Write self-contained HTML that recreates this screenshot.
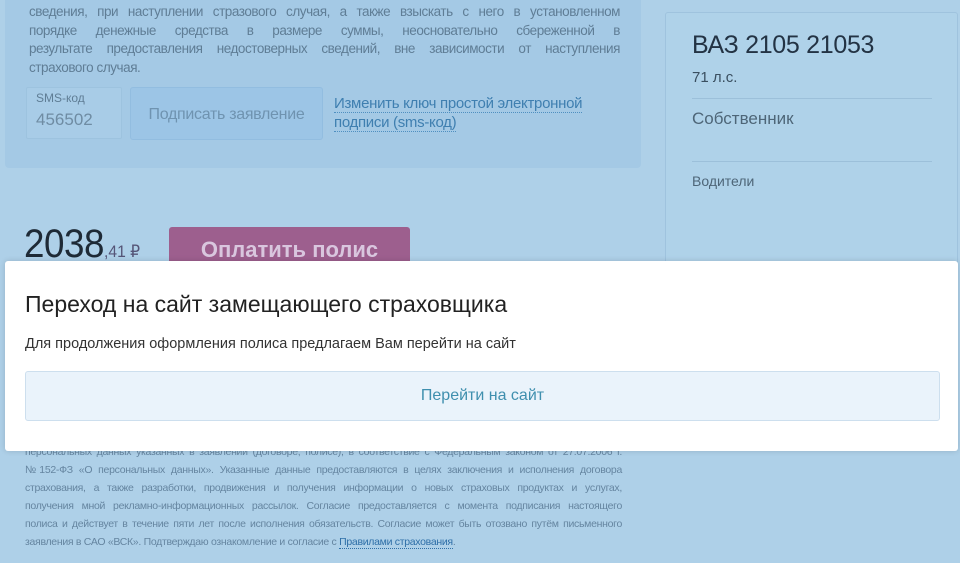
<!DOCTYPE html>
<html><head><meta charset="utf-8"><style>
*{margin:0;padding:0;box-sizing:border-box}
body{width:960px;height:563px;overflow:hidden;background:#aed0e8;font-family:"Liberation Sans","DejaVu Sans",sans-serif;position:relative;color:#4f6a80}
.abs{position:absolute}
.lp{left:5px;top:-6px;width:636px;height:174px;background:#a4c9e5;border-radius:4px}
.rp{left:665px;top:12px;width:293px;height:260px;background:#afd2e9;border:1px solid #9fc3de;border-radius:3px}
.hr{height:1px;background:#9cc0da}
.modal{left:5px;top:261px;width:953px;height:190px;background:#fff;border-radius:3px;box-shadow:0 0 6px rgba(0,0,0,.15)}
.btn{left:20px;top:110px;width:915px;height:50px;background:#eaf3fb;border:1px solid #cddfee;border-radius:3px;text-align:center;line-height:48px;font-size:16px;color:#3f8fae}
.j div{text-align:justify;text-align-last:justify;white-space:nowrap}
.j div.l{text-align-last:left}
.top{left:29px;top:3px;width:591px;font-size:13.5px;line-height:18.5px;color:#5f7d95;letter-spacing:-0.45px}
.small{left:25px;top:443px;width:597px;font-size:10.5px;line-height:18px;color:#6585a0;letter-spacing:-0.3px}
</style></head><body>
<div class="abs lp"></div>
<div class="abs top j">
<div>сведения, при наступлении стразового случая, а также взыскать с него в установленном</div>
<div>порядке денежные средства в размере суммы, неосновательно сбереженной в</div>
<div>результате предоставления недостоверных сведений, вне зависимости от наступления</div>
<div class="l">страхового случая.</div>
</div>
<div class="abs" style="left:26px;top:87px;width:96px;height:52px;border:1px solid #9dc3df;background:#a8cce7;border-radius:2px"></div>
<div class="abs" style="left:36px;top:91px;font-size:12px;color:#5f7d95">SMS-код</div>
<div class="abs" style="left:36px;top:110px;font-size:17px;color:#6f8ca3">456502</div>
<div class="abs" style="left:130px;top:87px;width:193px;height:53px;background:#9cc5e6;border:1px solid #92bde0;border-radius:3px;text-align:center;line-height:53px;font-size:16px;color:#6f93b0;letter-spacing:-0.3px">Подписать заявление</div>
<div class="abs" style="left:334px;top:94px;font-size:15px;line-height:19px;color:#3f7fb0;width:280px;letter-spacing:-0.3px"><span style="border-bottom:1px dotted #4f8fc0">Изменить ключ простой электронной</span><br><span style="border-bottom:1px dotted #4f8fc0">подписи (sms-код)</span></div>
<div class="abs" style="left:24px;top:222px;font-size:40px;color:#1e2a36;letter-spacing:-0.5px;transform:scaleX(.92);transform-origin:0 0">2038<span style="font-size:17px;color:#557;letter-spacing:0">,41 ₽</span></div>
<div class="abs" style="left:169px;top:227px;width:241px;height:40px;background:#9d5f8e;border-radius:3px;text-align:center;color:#d9c6de;font-weight:bold;font-size:22px;line-height:46px">Оплатить полис</div>
<div class="abs rp">
<div style="position:absolute;left:26px;top:18px;font-size:25px;color:#233344;letter-spacing:-0.3px">ВАЗ 2105 21053</div>
<div style="position:absolute;left:26px;top:56px;font-size:15px;color:#3a4f60">71 л.с.</div>
<div class="hr" style="position:absolute;left:26px;top:85px;width:240px"></div>
<div style="position:absolute;left:26px;top:96px;font-size:17px;color:#4e6678">Собственник</div>
<div class="hr" style="position:absolute;left:26px;top:148px;width:240px"></div>
<div style="position:absolute;left:26px;top:160px;font-size:14px;color:#4e6678">Водители</div>
</div>
<div class="abs small j">
<div>персональных данных указанных в заявлении (договоре, полисе), в соответствие с Федеральным законом от 27.07.2006 г.</div>
<div>№152-ФЗ «О персональных данных». Указанные данные предоставляются в целях заключения и исполнения договора</div>
<div>страхования, а также разработки, продвижения и получения информации о новых страховых продуктах и услугах,</div>
<div>получения мной рекламно-информационных рассылок. Согласие предоставляется с момента подписания настоящего</div>
<div>полиса и действует в течение пяти лет после исполнения обязательств. Согласие может быть отозвано путём письменного</div>
<div class="l">заявления в САО «ВСК». Подтверждаю ознакомление и согласие с <span style="color:#2e6fa8;border-bottom:1px dotted #2e6fa8">Правилами страхования</span>.</div>
</div>
<div class="abs modal">
<div style="position:absolute;left:20px;top:30px;font-size:23px;color:#222">Переход на сайт замещающего страховщика</div>
<div style="position:absolute;left:20px;top:75px;font-size:14.5px;color:#333">Для продолжения оформления полиса предлагаем Вам перейти на сайт</div>
<div class="abs btn">Перейти на сайт</div>
</div>
</body></html>
